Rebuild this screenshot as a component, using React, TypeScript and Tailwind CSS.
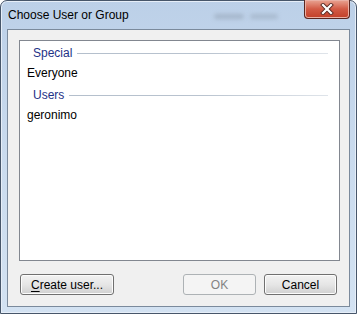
import React from "react";

const font = "font-['Liberation_Sans',Arial,sans-serif]";

const GroupHeader = ({ label }: { label: string }) => (
  <div className="mt-[2px] flex h-[20px] items-center pl-[13px] pr-[11px]">
    <span className="text-[12px] leading-none text-[#1e3287]">{label}</span>
    <div className="ml-[5px] h-px flex-1 bg-gradient-to-r from-[#b4bfcc] via-[#b9c3cf] to-[#dfe4ea]" />
  </div>
);

const Item = ({ label }: { label: string }) => (
  <div className="flex h-[20px] items-center pl-[7px] text-[12px] leading-none text-black">
    {label}
  </div>
);

const Button = ({
  children,
  disabled,
  className,
}: {
  children: React.ReactNode;
  disabled?: boolean;
  className?: string;
}) => (
  <div
    className={
      "flex h-[21px] items-center justify-center rounded-[3px] border text-[12px] leading-none " +
      (disabled
        ? "border-[#adb2b5] bg-[#f4f4f4] text-[#838383] "
        : "border-[#707070] bg-gradient-to-b from-[#f2f2f2] via-[#e6e6e6] to-[#d0d0d0] text-black shadow-[inset_0_0_0_1px_#fcfcfc] ") +
      (className ?? "")
    }
  >
    {children}
  </div>
);

export default function App() {
  return (
    <div
      className={
        font +
        " flex h-[314px] w-[357px] flex-col rounded-t-[7px] border border-[#47566a] bg-gradient-to-b from-[#bcd0e8] via-[#cadbee] to-[#d3e2f2] px-[6px] pb-[6px] shadow-[inset_0_0_0_1px_#e6eef8]"
      }
    >
      {/* title bar */}
      <div className="flex h-[28px] items-start">
        <div className="pl-[1px] pt-[7px] text-[12px] leading-[14px] text-black">
          Choose User or Group
        </div>
        <div className="flex flex-1 items-start justify-center gap-[6px] pt-[13px] pl-[60px]">
          <div className="h-[5px] w-[30px] rounded-full bg-[#9aaabd] opacity-70 blur-[2px]" />
          <div className="h-[5px] w-[28px] rounded-full bg-[#9aaabd] opacity-60 blur-[2px]" />
        </div>
        <div className="-mt-px flex h-[19px] w-[46px] items-center justify-center rounded-b-[4px] border border-t-0 border-[#5a2620] bg-gradient-to-b from-[#e8a493] via-[#d25a45] to-[#c23f28] shadow-[inset_0_0_0_1px_#eab0a4]">
          <svg width="14" height="12" viewBox="0 0 14 12">
            <path d="M3 2 L11 10 M11 2 L3 10" stroke="#5a2a24" strokeWidth="4" strokeLinecap="square" />
            <path d="M3 2 L11 10 M11 2 L3 10" stroke="#ffffff" strokeWidth="2.2" strokeLinecap="square" />
          </svg>
        </div>
      </div>

      {/* client area */}
      <div className="flex flex-1 flex-col border border-[#7b8a9c] bg-[#f0f0f0] pb-[11px] pl-[11px] pr-[9px] pt-[10px]">
        <div className="flex-1 border border-[#828790] bg-white">
          <GroupHeader label="Special" />
          <Item label="Everyone" />
          <GroupHeader label="Users" />
          <Item label="geronimo" />
        </div>
        <div className="mt-[13px] flex items-center">
          <Button className="ml-px w-[94px]">
            <span>
              <span className="underline underline-offset-2">C</span>reate user...
            </span>
          </Button>
          <div className="flex-1" />
          <Button disabled className="w-[73px]">
            OK
          </Button>
          <Button className="ml-[8px] mr-[3px] w-[73px]">Cancel</Button>
        </div>
      </div>
    </div>
  );
}
